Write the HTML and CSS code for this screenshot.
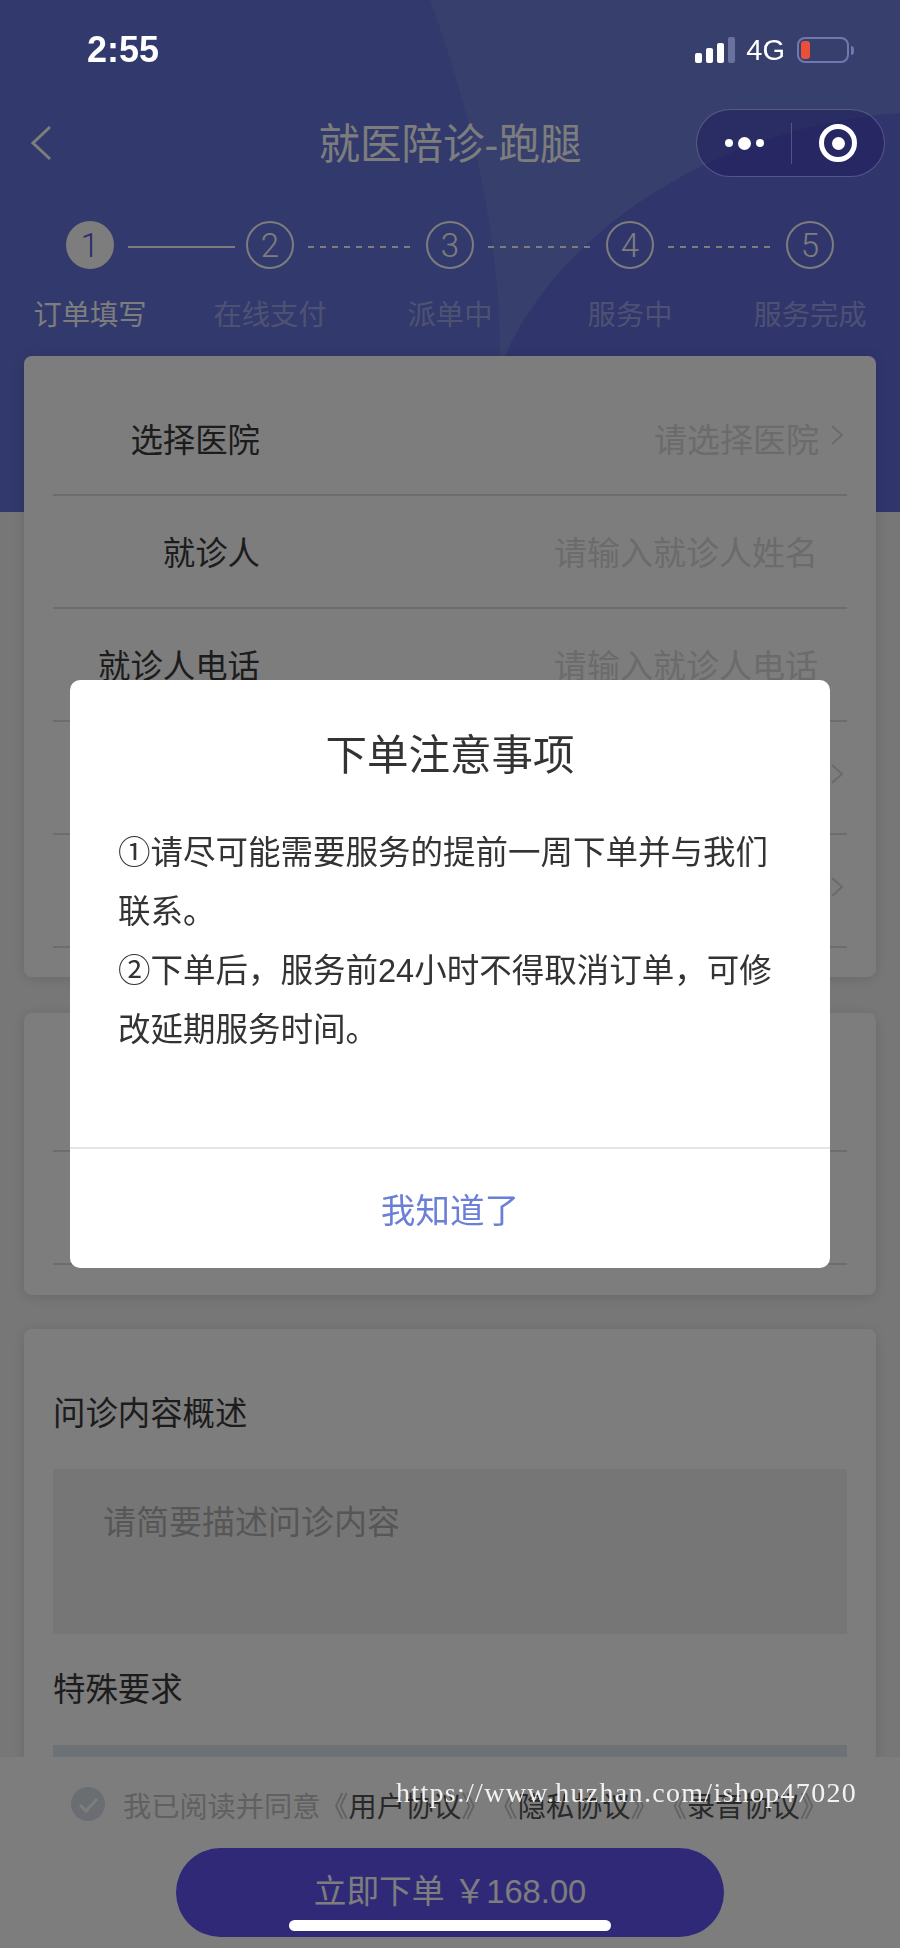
FILE: index.html
```html
<!DOCTYPE html>
<html lang="zh-CN">
<head>
    <meta charset="UTF-8">
    <meta name="viewport" content="width=device-width, initial-scale=1.0">
    <title>就医陪诊-跑腿</title>
    <link rel="stylesheet" href="styles.css">
</head>
<body>
    <div class="page">
        <header class="header">
            <svg class="header-bg" viewBox="0 0 900 512" preserveAspectRatio="none">
                <path d="M430 0 C470 110 500 230 500 356 L500 512 L900 512 L900 0 Z" fill="#7080de"></path>
                <path d="M505 356 C560 230 720 125 900 113 L900 512 L505 512 Z" fill="#626cdc"></path>
            </svg>

            <div class="status-bar">
                <span class="status-time">2:55</span>
                <div class="status-right">
                    <div class="signal">
                        <i class="bar bar-1"></i>
                        <i class="bar bar-2"></i>
                        <i class="bar bar-3"></i>
                        <i class="bar bar-4"></i>
                    </div>
                    <span class="network">4G</span>
                    <div class="battery"><i class="battery-level"></i></div>
                    <i class="battery-nub"></i>
                </div>
            </div>

            <div class="nav">
                <svg class="back" viewBox="0 0 24 36">
                    <polyline points="21,2 4,18 21,34"></polyline>
                </svg>
                <h1 class="nav-title">就医陪诊-跑腿</h1>
            </div>

            <div class="capsule">
                <div class="capsule-more">
                    <i class="dot"></i>
                    <i class="dot dot-big"></i>
                    <i class="dot"></i>
                </div>
                <i class="capsule-line"></i>
                <div class="capsule-close"><i></i></div>
            </div>

            <div class="steps">
                <span class="step-num active">1</span>
                <i class="step-line solid"></i>
                <span class="step-num">2</span>
                <i class="step-line"></i>
                <span class="step-num">3</span>
                <i class="step-line"></i>
                <span class="step-num">4</span>
                <i class="step-line"></i>
                <span class="step-num">5</span>
            </div>
            <div class="step-labels">
                <span class="active">订单填写</span>
                <span>在线支付</span>
                <span>派单中</span>
                <span>服务中</span>
                <span>服务完成</span>
            </div>
        </header>

        <main class="content">
            <section class="card card-form">
                <div class="row">
                    <span class="row-label">选择医院</span>
                    <span class="row-value select">请选择医院</span>
                    <svg class="arrow" viewBox="0 0 14 22"><polyline points="2,2 12,11 2,20"></polyline></svg>
                </div>
                <div class="row">
                    <span class="row-label">就诊人</span>
                    <span class="row-value">请输入就诊人姓名</span>
                </div>
                <div class="row">
                    <span class="row-label">就诊人电话</span>
                    <span class="row-value">请输入就诊人电话</span>
                </div>
                <div class="row">
                    <svg class="arrow" viewBox="0 0 14 22"><polyline points="2,2 12,11 2,20"></polyline></svg>
                </div>
                <div class="row">
                    <svg class="arrow" viewBox="0 0 14 22"><polyline points="2,2 12,11 2,20"></polyline></svg>
                </div>
            </section>

            <section class="card card-form card-short">
                <div class="row"></div>
                <div class="row"></div>
            </section>

            <section class="card card-text">
                <h3 class="text-title">问诊内容概述</h3>
                <div class="text-box">请简要描述问诊内容</div>
                <h3 class="text-title second">特殊要求</h3>
                <div class="text-box blue"></div>
            </section>
        </main>

        <footer class="footer">
            <div class="agree">
                <svg class="check" viewBox="0 0 34 34">
                    <circle cx="17" cy="17" r="17" fill="#d8e0e8"></circle>
                    <polyline points="9,18 15,24 26,12" fill="none" stroke="#fff" stroke-width="3"></polyline>
                </svg>
                <span>我已阅读并同意</span><span>《<b>用户协议</b>》</span><span>《<b>隐私协议</b>》</span><span>《<b>录音协议</b>》</span>
            </div>
            <button class="submit" type="button">立即下单 <span class="price">￥168.00</span></button>
        </footer>
    </div>

    <div class="mask">
        <div class="modal">
            <h2 class="modal-title">下单注意事项</h2>
            <div class="modal-body">
                ①请尽可能需要服务的提前一周下单并与我们联系。<br>
                ②下单后，服务前24小时不得取消订单，可修改延期服务时间。
            </div>
            <button class="modal-btn" type="button">我知道了</button>
        </div>
    </div>

    <div class="home-bar"></div>
    <div class="watermark">https://www.huzhan.com/ishop47020</div>
</body>
</html>
```

FILE: styles.css
```css
* {
    box-sizing: border-box;
}
body {
    margin: 0;
    width: 900px;
    height: 1948px;
    overflow: hidden;
    position: relative;
    background-color: #f3f3f3;
    font-family: "Liberation Sans", "Noto Sans CJK SC", sans-serif;
    color: #333;
}
.page {
    height: 1948px;
}

/* header */
.header {
    position: relative;
    height: 512px;
    background-color: #6674dc;
}
.header-bg {
    position: absolute;
    left: 0;
    top: 0;
    width: 900px;
    height: 512px;
}
.status-bar {
    position: relative;
    z-index: 20;
    display: flex;
    justify-content: space-between;
    align-items: center;
    height: 100px;
    padding: 0 46px 0 87px;
    color: #fff;
}
.status-time {
    font-size: 36px;
    font-weight: 700;
}
.status-right {
    display: flex;
    align-items: center;
}
.signal {
    display: flex;
    align-items: flex-end;
    gap: 4px;
    height: 26px;
    margin-right: 11px;
}
.bar {
    display: block;
    width: 7px;
    background-color: #fff;
    border-radius: 2px;
}
.bar-1 { height: 10px; }
.bar-2 { height: 15px; }
.bar-3 { height: 20px; }
.bar-4 { height: 26px; background-color: #6a719f; }
.network {
    font-size: 29px;
    margin-right: 12px;
}
.battery {
    width: 52px;
    height: 26px;
    padding: 2px;
    border: 2px solid #7178b0;
    border-radius: 8px;
}
.battery-level {
    display: block;
    width: 9px;
    height: 18px;
    background-color: #e8503a;
    border-radius: 3px;
}
.battery-nub {
    display: block;
    width: 3px;
    height: 9px;
    margin-left: 2px;
    background-color: #7178b0;
    border-radius: 0 3px 3px 0;
}
.nav {
    position: relative;
    display: flex;
    justify-content: center;
    align-items: center;
    height: 88px;
}
.back {
    position: absolute;
    left: 29px;
    top: 25px;
    width: 24px;
    height: 36px;
}
.back polyline {
    fill: none;
    stroke: #fff;
    stroke-width: 3;
}
.nav-title {
    margin: 0;
    padding-bottom: 6px;
    font-size: 41.5px;
    font-weight: 400;
    color: #fff;
}
.capsule {
    position: absolute;
    z-index: 20;
    left: 696px;
    top: 109px;
    display: flex;
    align-items: center;
    width: 189px;
    height: 68px;
    border: 1px solid rgba(255, 255, 255, 0.22);
    border-radius: 34px;
    background-color: rgba(30, 28, 90, 0.5);
}
.capsule-more {
    display: flex;
    justify-content: center;
    align-items: center;
    gap: 5px;
    width: 94px;
}
.dot {
    display: block;
    width: 8px;
    height: 8px;
    background-color: #fff;
    border-radius: 50%;
}
.dot-big {
    width: 13px;
    height: 13px;
}
.capsule-line {
    display: block;
    width: 1px;
    height: 41px;
    background-color: rgba(255, 255, 255, 0.2);
}
.capsule-close {
    display: flex;
    justify-content: center;
    align-items: center;
    width: 38px;
    height: 38px;
    margin-left: 27px;
    border: 5px solid #fff;
    border-radius: 50%;
}
.capsule-close i {
    display: block;
    width: 13px;
    height: 13px;
    background-color: #fff;
    border-radius: 50%;
}

/* steps */
.steps {
    position: relative;
    display: flex;
    align-items: flex-start;
    margin-top: 33px;
    padding-left: 66px;
}
.step-num {
    display: flex;
    justify-content: center;
    align-items: center;
    flex: none;
    width: 48px;
    height: 48px;
    border: 2px solid #fff;
    border-radius: 50%;
    font-family: Roboto, sans-serif;
    font-size: 33px;
    font-weight: 300;
    color: #fff;
}
.step-num.active {
    background-color: #fff;
    color: #6058e0;
}
.step-line {
    display: block;
    flex: none;
    width: 107px;
    height: 2px;
    margin: 25px 11px 0 14px;
    background-image: repeating-linear-gradient(to right, #fff 0, #fff 6px, transparent 6px, transparent 12px);
}
.step-line.solid {
    background-image: none;
    background-color: #fff;
}
.step-labels {
    position: relative;
    display: grid;
    grid-template-columns: repeat(5, 180px);
    margin-top: 26px;
    font-size: 28.3px;
    line-height: 40px;
    text-align: center;
    color: rgba(255, 255, 255, 0.4);
}
.step-labels .active {
    color: #fff;
}

/* cards */
.content {
    position: relative;
    margin-top: -156px;
    padding: 0 24px;
}
.card {
    background-color: #fff;
    border-radius: 8px;
    box-shadow: 0 2px 14px rgba(0, 0, 0, 0.12);
}
.card-form {
    padding: 27px 29px 29px;
    height: 621px;
}
.card-short {
    height: 282px;
    margin-top: 36px;
    padding-top: 26px;
}
.row {
    display: flex;
    align-items: center;
    height: 113px;
    border-bottom: 2px solid #dedede;
}
.row-label {
    width: 207px;
    padding-bottom: 2px;
    font-size: 32.4px;
    text-align: right;
    color: #3a3a3a;
}
.row-value {
    margin-left: auto;
    padding-right: 29px;
    padding-bottom: 2px;
    font-size: 33px;
    color: #dadada;
}
.row-value.select {
    padding-right: 11px;
}
.arrow {
    width: 14px;
    height: 22px;
    margin-top: -8px;
    margin-right: 3px;
    margin-left: auto;
}
.select + .arrow {
    margin-left: 0;
}
.arrow polyline {
    fill: none;
    stroke: #d8d8d8;
    stroke-width: 2;
}
.card-text {
    margin-top: 34px;
    height: 500px;
    padding: 61px 29px 0;
}
.text-title {
    margin: 0;
    font-size: 32.4px;
    font-weight: 400;
    line-height: 48px;
    color: #3a3a3a;
}
.text-title.second {
    margin-top: 32px;
}
.text-box {
    height: 165px;
    margin-top: 31px;
    padding: 30px 50px;
    background-color: #f0f0f0;
    font-size: 33px;
    line-height: 48px;
    color: #b0b0b0;
}
.text-box.blue {
    background-color: #dfe8f1;
}

/* footer */
.footer {
    position: absolute;
    left: 0;
    bottom: 0;
    width: 900px;
    height: 191px;
    background-color: #fff;
}
.agree {
    display: flex;
    align-items: center;
    height: 94px;
    padding-left: 71px;
    font-size: 28.2px;
    color: #c4c4c4;
}
.agree b {
    font-weight: 400;
    color: #555;
}
.check {
    width: 34px;
    height: 34px;
    margin-right: 18px;
}
.submit {
    display: block;
    width: 548px;
    height: 89px;
    margin: -3px auto 0;
    padding: 0 0 8px;
    border: none;
    border-radius: 45px;
    background-color: #6054f4;
    font-family: "Liberation Sans", "Noto Sans CJK SC", sans-serif;
    font-size: 32.7px;
    color: #fff;
}

/* dialog */
.mask {
    position: fixed;
    z-index: 10;
    left: 0;
    top: 0;
    display: flex;
    justify-content: center;
    align-items: center;
    width: 900px;
    height: 1948px;
    background-color: rgba(0, 0, 0, 0.51);
}
.modal {
    width: 760px;
    background-color: #fff;
    border-radius: 10px;
    overflow: hidden;
}
.modal-title {
    margin: 0;
    padding-top: 46px;
    font-size: 41.5px;
    font-weight: 400;
    line-height: 60px;
    text-align: center;
}
.modal-body {
    margin-top: 38px;
    padding: 0 44px 87px 48px;
    font-size: 32.5px;
    line-height: 59px;
}
.modal-btn {
    display: block;
    width: 100%;
    height: 121px;
    padding-bottom: 3px;
    border: none;
    border-top: 2px solid #e5e5e5;
    background: none;
    font-family: "Liberation Sans", "Noto Sans CJK SC", sans-serif;
    font-size: 34.6px;
    color: #6b7fd7;
}
.home-bar {
    position: absolute;
    z-index: 20;
    left: 289px;
    top: 1920px;
    width: 322px;
    height: 11px;
    background-color: #fff;
    border-radius: 6px;
}
.watermark {
    position: absolute;
    z-index: 20;
    left: 396px;
    top: 1777px;
    font-family: "Liberation Serif", serif;
    font-size: 28px;
    line-height: 32px;
    letter-spacing: 1.3px;
    color: rgba(255, 255, 255, 0.9);
}
```
